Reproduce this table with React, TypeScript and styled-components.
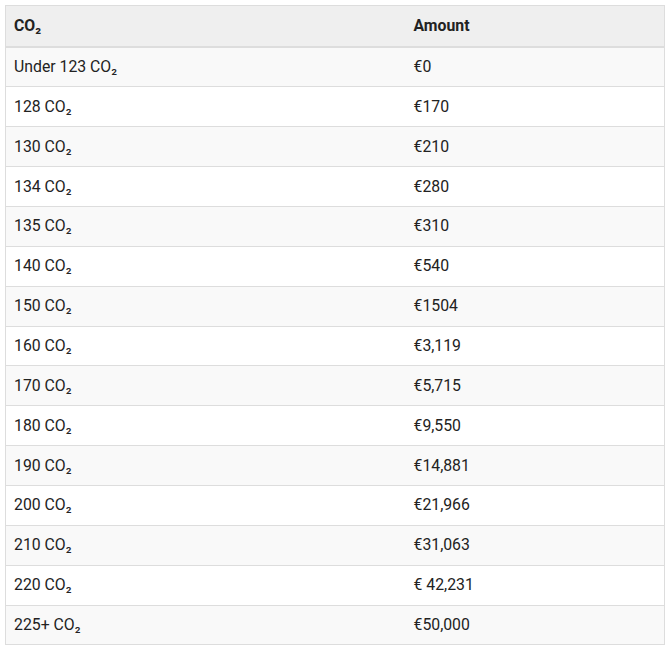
import React from "react";
import styled, { createGlobalStyle } from "styled-components";

const Global = createGlobalStyle`
  html, body { margin: 0; padding: 0; background: #ffffff; }
  body { font-family: Roboto, "Liberation Sans", Arial, sans-serif; }
`;

const Wrap = styled.div`
  padding: 5px 6px 0 5px;
`;

const Table = styled.table`
  width: 660px;
  border-collapse: collapse;
  border: 1px solid #dddddd;
  font-size: 15.8px;
  color: #222222;
`;

const HeadCell = styled.th<{ $w?: string }>`
  text-align: left;
  font-weight: 700;
  background: #efefef;
  padding: 0 8px;
  line-height: 22px;
  height: 41.5px;
  box-sizing: border-box;
  border-bottom: 2px solid #dddddd;
  width: ${(p) => p.$w || "auto"};
`;

const Row = styled.tr<{ $odd: boolean }>`
  background: ${(p) => (p.$odd ? "#f9f9f9" : "#ffffff")};
  border-top: 1px solid #dddddd;
`;

const Cell = styled.td`
  padding: 0 8px;
  line-height: 22px;
  height: 39.86px;
  box-sizing: border-box;
`;

const rows: [string, string][] = [
  ["Under 123 CO₂", "€0"],
  ["128 CO₂", "€170"],
  ["130 CO₂", "€210"],
  ["134 CO₂", "€280"],
  ["135 CO₂", "€310"],
  ["140 CO₂", "€540"],
  ["150 CO₂", "€1504"],
  ["160 CO₂", "€3,119"],
  ["170 CO₂", "€5,715"],
  ["180 CO₂", "€9,550"],
  ["190 CO₂", "€14,881"],
  ["200 CO₂", "€21,966"],
  ["210 CO₂", "€31,063"],
  ["220 CO₂", "€ 42,231"],
  ["225+ CO₂", "€50,000"],
];

export default function App() {
  return (
    <>
      <Global />
      <Wrap>
        <Table>
          <thead>
            <tr>
              <HeadCell $w="400px">CO₂</HeadCell>
              <HeadCell>Amount</HeadCell>
            </tr>
          </thead>
          <tbody>
            {rows.map(([a, b], i) => (
              <Row key={a} $odd={i % 2 === 0}>
                <Cell>{a}</Cell>
                <Cell>{b}</Cell>
              </Row>
            ))}
          </tbody>
        </Table>
      </Wrap>
    </>
  );
}
